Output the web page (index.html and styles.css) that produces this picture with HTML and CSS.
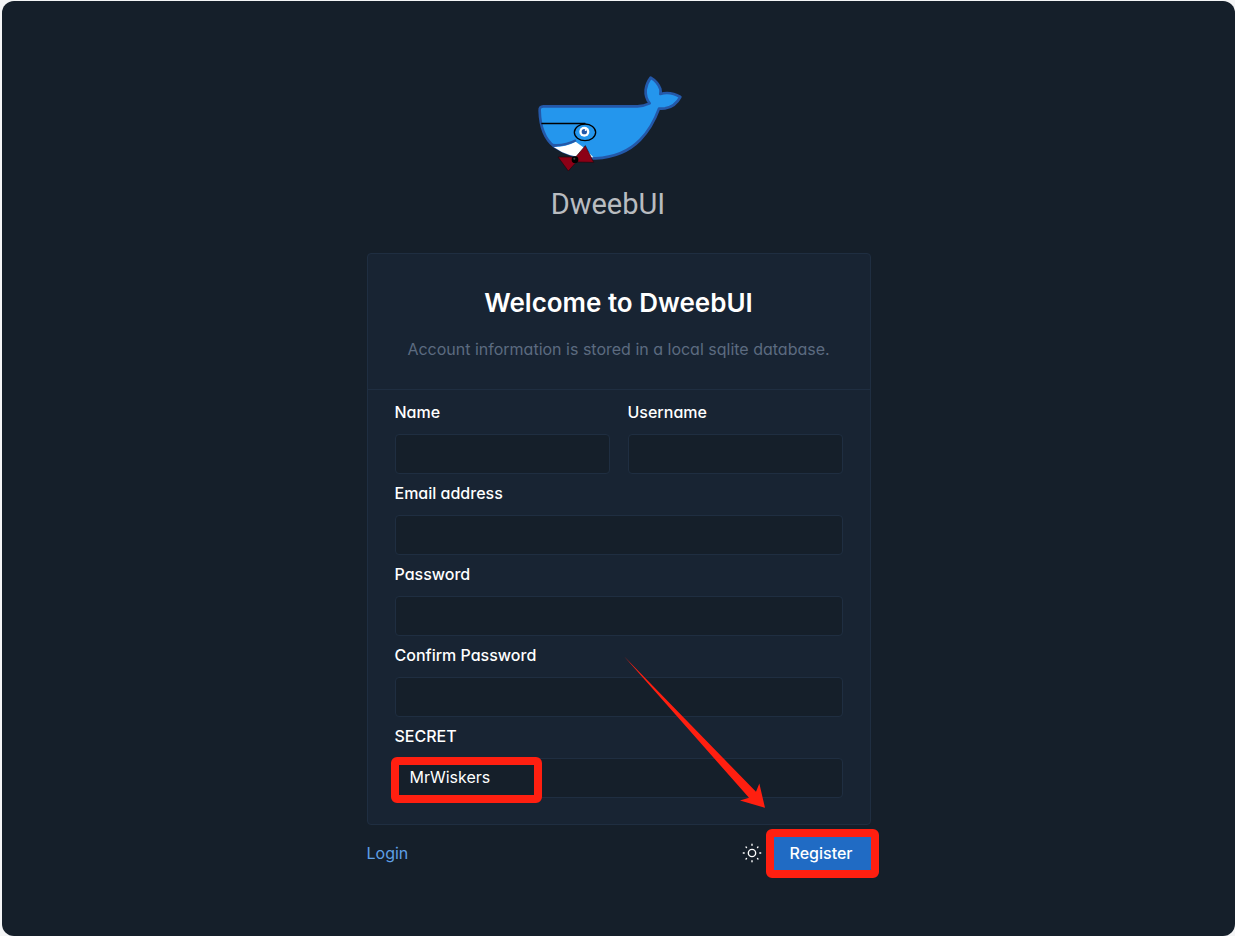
FILE: index.html
```html
<!DOCTYPE html>
<html lang="en">
<head>
  <meta charset="utf-8">
  <meta name="viewport" content="width=device-width, initial-scale=1">
  <title>DweebUI</title>
  <link rel="stylesheet" href="styles.css">
</head>
<body>
  <main class="page">
    <form class="register" onsubmit="return false">
      <svg class="logo" viewBox="0 0 534 480" role="img" aria-label="DweebUI">
        <path class="whale" d="M40 124 H322 Q342 123 359 115 Q345 98 347 74 Q350 54 362 38 Q383 50 391 72 Q393 80 391 87 Q421 78 451 96 Q435 126 405 130 Q394 131 387 131 Q366 189 330 225 Q280 276 197 280 Q130 282 72 244 Q31 211 29 137 Q28 124 40 124 Z"/>
        <path class="belly" d="M71 246 Q108 246 137 230 L162 248 L190 277 Q120 282 71 246 Z"/>
        <path class="mouth" d="M66 240 Q106 243 138 226"/>
        <path class="glasses" d="M34 175.500 H166"/>
        <ellipse class="glasses" cx="165" cy="202" rx="32" ry="25"/>
        <circle class="eye" cx="163" cy="200" r="15"/>
        <circle class="pupil" cx="163" cy="200" r="8"/>
        <circle class="eye" cx="167" cy="195" r="3"/>
        <path class="bow" d="M84 276 L137 276 L166 242 L191 292 L139 291 L115 318 Z"/>
        <circle class="knot" cx="135" cy="284" r="10"/>
        <circle class="shine" cx="133" cy="281" r="3"/>
        <text class="wordmark" x="62" y="446">DweebUI</text>
      </svg>

      <section class="card">
        <header class="card-header">
          <h1 class="title">Welcome to DweebUI</h1>
          <p class="subtitle">Account information is stored in a local sqlite database.</p>
        </header>
        <div class="card-body">
          <div class="row">
            <div class="field">
              <label class="label" for="name">Name</label>
              <input class="input" id="name" type="text">
            </div>
            <div class="field">
              <label class="label" for="username">Username</label>
              <input class="input" id="username" type="text">
            </div>
          </div>
          <div class="field">
            <label class="label" for="email">Email address</label>
            <input class="input" id="email" type="email">
          </div>
          <div class="field">
            <label class="label" for="password">Password</label>
            <input class="input" id="password" type="password">
          </div>
          <div class="field">
            <label class="label" for="confirm">Confirm Password</label>
            <input class="input" id="confirm" type="password">
          </div>
          <div class="field">
            <label class="label" for="secret">SECRET</label>
            <div class="marked">
              <input class="input" id="secret" type="text" value="MrWiskers">
              <span class="mark mark-secret"></span>
            </div>
          </div>
        </div>
      </section>

      <footer class="actions">
        <a class="login" href="#">Login</a>
        <button class="theme" type="button" aria-label="Toggle theme">
          <svg class="sun" viewBox="0 0 48 48">
            <circle cx="24" cy="24" r="8"/>
            <path d="M5 24h2M24 5v2M41 24h2M24 41v2M11 11l1 1M37 11l-1 1M36 36l1 1M12 36l-1 1"/>
          </svg>
        </button>
        <div class="marked">
          <button class="submit" type="submit">Register</button>
          <span class="mark mark-submit"></span>
        </div>
        <svg class="arrow" viewBox="0 0 423 455">
          <path d="M0 0 L396 407 L406 382 L423 455 L348 433 L375 425 Z"/>
        </svg>
      </footer>
    </form>
  </main>
</body>
</html>
```
FILE: styles.css
```css
* {
  box-sizing: border-box;
}

body {
  margin: 0;
  background: #f4f5f6;
  color: #fff;
  font-family: Inter, "Liberation Sans", sans-serif;
  font-size: 16px;
  line-height: 22px;
  font-feature-settings: "cv03", "cv04", "cv11";
}

.page {
  min-height: calc(100vh - 1px);
  margin: 1px 0 0 2px;
  padding: 64px 16px 56px;
  border-radius: 12px;
  background: #151f2a;
}

.register {
  max-width: 504px;
  margin: 0 auto;
}

.logo {
  display: block;
  width: 178px;
  height: 160px;
  margin: 0 auto 28px;
}

.whale {
  fill: #2496ed;
  stroke: #2458a8;
  stroke-width: 8;
  stroke-linejoin: round;
}

.belly,
.eye {
  fill: #fff;
}

.mouth {
  fill: none;
  stroke: #2458a8;
  stroke-width: 7;
}

.glasses {
  fill: none;
  stroke: #000;
  stroke-width: 4;
}

.pupil {
  fill: #2458a8;
}

.bow {
  fill: #8c0016;
  stroke: #22060c;
  stroke-width: 2;
}

.knot {
  fill: #000;
}

.shine {
  fill: #444;
}

.wordmark {
  fill: #b9bcc0;
  font-family: Roboto, sans-serif;
  font-size: 87px;
}

.card {
  border: 1px solid #1f2e41;
  border-radius: 4px;
  background: #182433;
}

.card-header {
  padding: 33px 16px 28px;
  border-bottom: 1px solid #1f2e41;
  text-align: center;
}

.title {
  margin: 0 0 18px;
  font-size: 26px;
  font-weight: 600;
  line-height: 32px;
}

.subtitle {
  margin: 0;
  color: #5c6b80;
  line-height: 24px;
}

.card-body {
  display: grid;
  gap: 8px;
  padding: 11px 27px 26px;
}

.row {
  display: grid;
  grid-template-columns: 1fr 1fr;
  gap: 18px;
}

.label {
  display: block;
  margin-bottom: 11px;
  font-weight: 500;
}

.input {
  display: block;
  width: 100%;
  height: 40px;
  padding: 0 14px 2px;
  border: 1px solid #1f2e41;
  border-radius: 4px;
  background: #151f2a;
  color: #fff;
  font: inherit;
}

.actions {
  position: relative;
  display: flex;
  align-items: center;
  margin-top: 8px;
}

.login {
  margin-right: auto;
  color: #5f9fe6;
  text-decoration: none;
}

.theme {
  padding: 0;
  margin-right: 9px;
  border: 0;
  background: none;
}

.sun {
  display: block;
  width: 22px;
  height: 22px;
  fill: none;
  stroke: #fff;
  stroke-width: 3;
  stroke-linecap: round;
}

.submit {
  display: block;
  height: 40px;
  padding: 0 18px;
  border: 0;
  border-radius: 4px;
  background: #206bc4;
  color: #fff;
  font: inherit;
  font-weight: 500;
}

.marked {
  position: relative;
}

.mark {
  position: absolute;
  border: 8px solid #ff1f10;
  border-radius: 6px;
  pointer-events: none;
}

.mark-secret {
  top: -1px;
  left: -4px;
  width: 151px;
  height: 46px;
}

.mark-submit {
  inset: -4px -8px -5px -6px;
}

.arrow {
  position: absolute;
  right: 106px;
  bottom: calc(100% + 25px);
  width: 141px;
  height: 152px;
  fill: #ff1f10;
  pointer-events: none;
}
```
